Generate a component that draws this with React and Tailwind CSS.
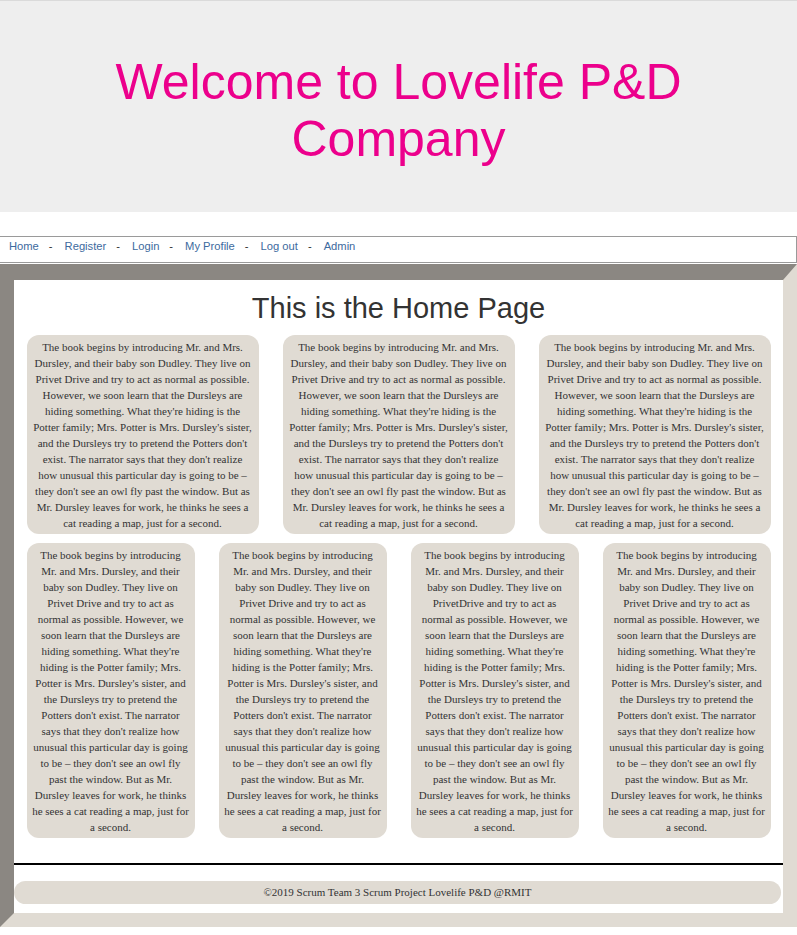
const STORY =
  "The book begins by introducing Mr. and Mrs. Dursley, and their baby son Dudley. They live on Privet Drive and try to act as normal as possible. However, we soon learn that the Dursleys are hiding something. What they're hiding is the Potter family; Mrs. Potter is Mrs. Dursley's sister, and the Dursleys try to pretend the Potters don't exist. The narrator says that they don't realize how unusual this particular day is going to be – they don't see an owl fly past the window. But as Mr. Dursley leaves for work, he thinks he sees a cat reading a map, just for a second.";

const links = ["Home", "Register", "Login", "My Profile", "Log out", "Admin"];

const topRow = [STORY, STORY, STORY];
const bottomRow = [STORY, STORY, STORY.replace("Privet Drive", "PrivetDrive"), STORY];

function Card({ text, size }) {
  return (
    <div
      className={`${size} rounded-[12px] bg-[#e0dbd3] pt-[4px] pb-[3px] text-center text-[11px] leading-[16px] text-[#333] font-['Liberation_Serif','Times_New_Roman',serif]`}
    >
      {text}
    </div>
  );
}

export default function App() {
  return (
    <div className="min-h-screen bg-white">
      {/* Header */}
      <header className="border-t border-[#dadada] bg-[#eeeeee] pt-[53px] pb-[44px]">
        <h1 className="mx-auto max-w-[620px] text-center text-[50px] leading-[57px] text-[#ec008c] font-['Liberation_Sans',Arial,sans-serif]">
          Welcome to Lovelife P&amp;D Company
        </h1>
      </header>

      {/* Nav */}
      <nav className="mt-[24px] h-[27px] border-y border-r border-[#9a9a9a] pl-[9px] pt-[3px] text-[11.2px] leading-[13px] font-['Liberation_Sans',Arial,sans-serif]">
        {links.map((l, i) => (
          <span key={l}>
            <a href="#" className="text-[#3d6a9e]">
              {l}
            </a>
            {i < links.length - 1 && <span className="ml-[10px] mr-[12px] text-[#333]">-</span>}
          </span>
        ))}
      </nav>

      {/* Main */}
      <main className="mt-[1px] border-[14px] border-t-[16px] border-t-[#8b8782] border-l-[#8b8782] border-r-[#e0dbd3] border-b-[#e0dbd3]">
        <div className="bg-white pt-[12px] pb-[9px]">
          <h2 className="text-center text-[29px] leading-[33px] text-[#333] font-['Liberation_Sans',Arial,sans-serif]">
            This is the Home Page
          </h2>

          <div className="mt-[10px] flex justify-center gap-[24px]">
            {topRow.map((t, i) => (
              <Card key={i} text={t} size="w-[232px] px-[6px]" />
            ))}
          </div>

          <div className="mt-[9px] flex justify-center gap-[24px]">
            {bottomRow.map((t, i) => (
              <Card key={i} text={t} size="w-[168px] px-[5.4px]" />
            ))}
          </div>

          <div className="mt-[25px] h-[2px] bg-black" />

          <footer className="mt-[16px] mr-[2px] flex h-[23px] items-center justify-center rounded-full bg-[#e0dbd3] text-[11px] text-[#333] font-['Liberation_Serif','Times_New_Roman',serif]">
            ©2019 Scrum Team 3 Scrum Project Lovelife P&amp;D @RMIT
          </footer>
        </div>
      </main>
    </div>
  );
}
